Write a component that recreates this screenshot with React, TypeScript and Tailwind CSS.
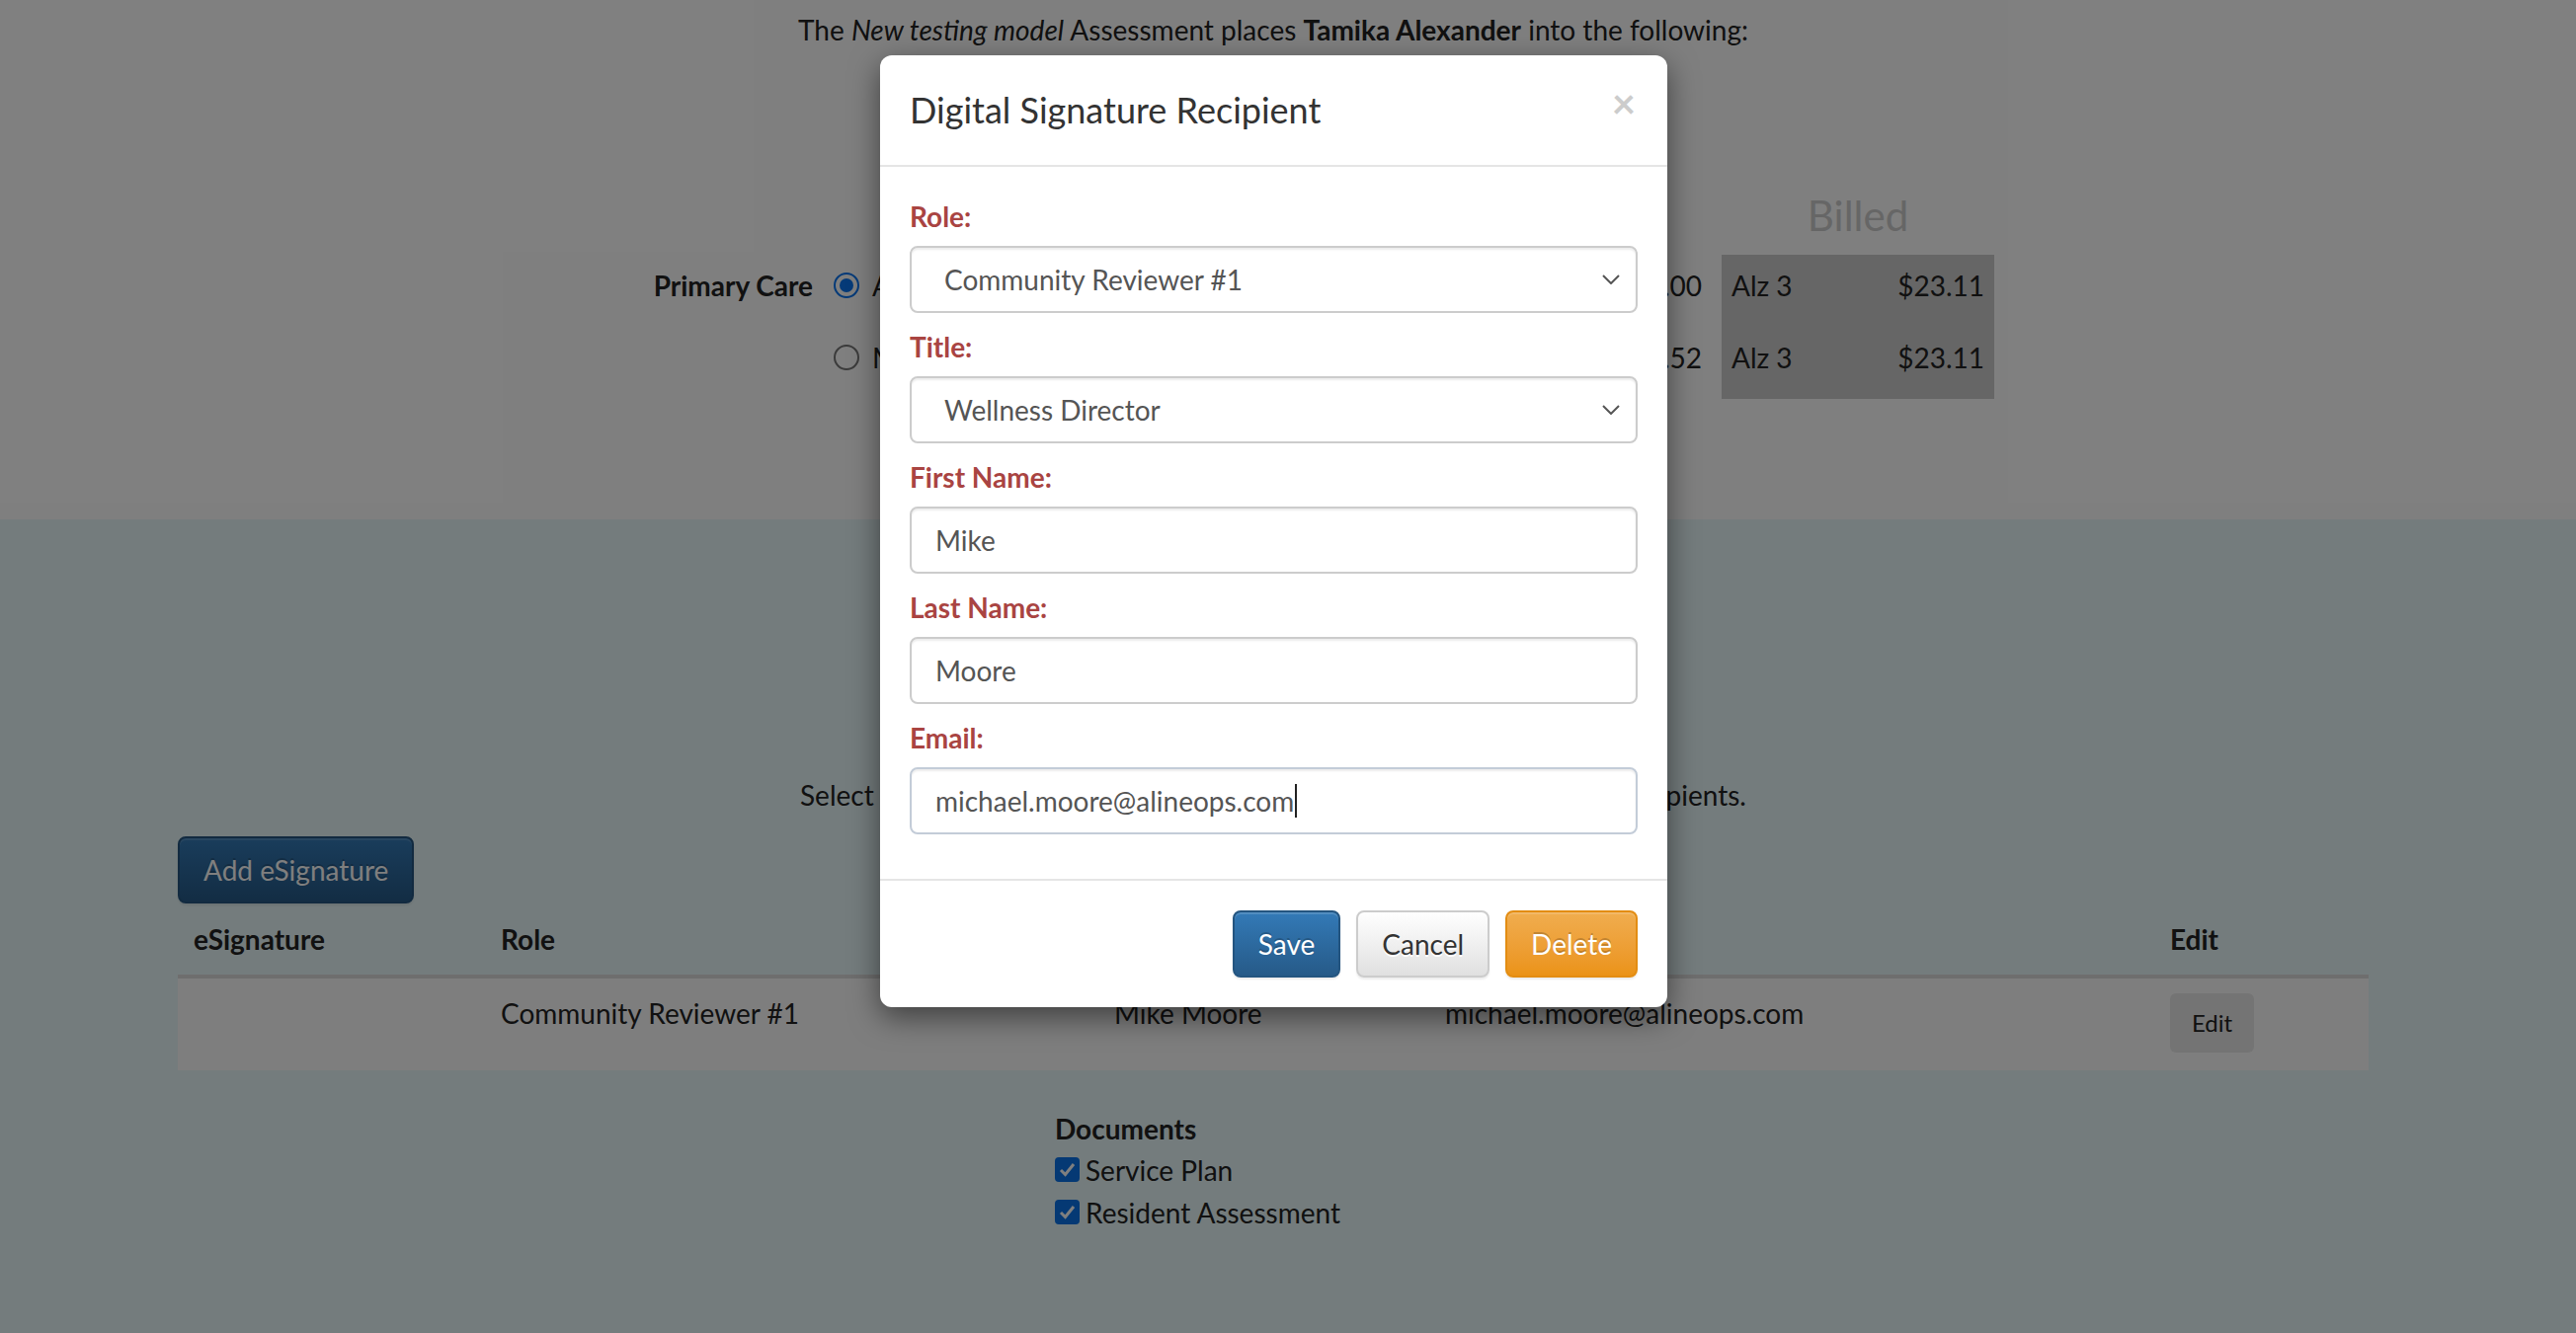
import React from "react";

const font = { fontFamily: "Lato, 'Noto Sans', sans-serif" };

function Chevron() {
  return (
    <svg width="18" height="10" viewBox="0 0 18 10" className="shrink-0">
      <polyline points="1,1 9,9 17,1" fill="none" stroke="#555" strokeWidth="2" />
    </svg>
  );
}

function SelectBox({ value }: { value: string }) {
  return (
    <div className="flex h-[68px] items-center justify-between rounded-[8px] border-2 border-[#ccc] bg-white pl-[33px] pr-[16px] text-[28px] text-[#555] shadow-[inset_0_2px_2px_rgba(0,0,0,0.075)]">
      <span>{value}</span>
      <Chevron />
    </div>
  );
}

function TextBox({ value, focused }: { value: string; focused?: boolean }) {
  return (
    <div
      className={`flex h-[68px] items-center rounded-[8px] border-2 bg-white px-[24px] text-[28px] text-[#555] shadow-[inset_0_2px_2px_rgba(0,0,0,0.075)] ${
        focused ? "border-[#c3ccd8]" : "border-[#ccc]"
      }`}
    >
      <span>{value}</span>
      {focused && <span className="ml-[1px] inline-block h-[34px] w-[2px] bg-[#222]" />}
    </div>
  );
}

function Field({ label, children }: { label: string; children: React.ReactNode }) {
  return (
    <div className="mb-[14px]">
      <div className="mb-[10px] text-[28px] font-bold leading-[40px] text-[#a94442]">{label}</div>
      {children}
    </div>
  );
}

function Btn({ kind, children }: { kind: "primary" | "default" | "warning"; children: React.ReactNode }) {
  const styles = {
    primary:
      "bg-gradient-to-b from-[#337ab7] to-[#265a88] border-[#245580] text-white [text-shadow:0_-2px_0_rgba(0,0,0,0.2)]",
    default:
      "bg-gradient-to-b from-white to-[#e0e0e0] border-[#ccc] text-[#333] [text-shadow:0_2px_0_#fff]",
    warning:
      "bg-gradient-to-b from-[#f0ad4e] to-[#eb9316] border-[#e38d13] text-white [text-shadow:0_-2px_0_rgba(0,0,0,0.2)]",
  }[kind];
  return (
    <button
      type="button"
      className={`h-[68px] rounded-[8px] border-2 px-[24px] text-[28px] leading-[40px] shadow-[inset_0_2px_0_rgba(255,255,255,0.15),0_2px_2px_rgba(0,0,0,0.075)] ${styles}`}
    >
      {children}
    </button>
  );
}

function CheckBox() {
  return (
    <span className="mr-[6px] inline-flex h-[25px] w-[25px] items-center justify-center rounded-[4px] bg-[#0a72e8]">
      <svg width="17" height="15" viewBox="0 0 17 15">
        <polyline points="2,8 6.5,12.5 15,2" fill="none" stroke="white" strokeWidth="3" />
      </svg>
    </span>
  );
}

function Radio({ checked }: { checked?: boolean }) {
  return (
    <span
      className={`inline-flex h-[26px] w-[26px] items-center justify-center rounded-full border-2 bg-white ${
        checked ? "border-[#0b75f0]" : "border-[#767676]"
      }`}
    >
      {checked && <span className="h-[14px] w-[14px] rounded-full bg-[#0b75f0]" />}
    </span>
  );
}

export default function App() {
  return (
    <div className="relative min-h-[1350px] overflow-hidden text-[28px] leading-[40px] text-[#333]" style={font}>
      {/* page behind the dialog */}
      <div className="h-[526px] bg-white pr-[30px]">
        <p className="pt-[10px] text-center text-[#222]">
          The <i>New testing model</i> Assessment places <b>Tamika Alexander</b> into the following:
        </p>
        <div className="ml-[500px] mt-[138px] grid grid-cols-[323px_60px_840px_20px_276px]">
          <div className="col-start-5 mb-[10px] text-center text-[42px] leading-[60px] text-[#ccc]">Billed</div>

          <div className="col-start-1 flex h-[73px] items-start justify-end pt-[11px] font-bold text-[#222]">Primary Care</div>
          <div className="flex h-[73px] items-start pl-[21px] pt-[18px]">
            <Radio checked />
          </div>
          <div className="flex h-[73px] items-start justify-between pt-[11px] text-[#222]">
            <span>Assisted Living</span>
            <span>$4,280.00</span>
          </div>
          <div />
          <div className="flex h-[73px] items-start justify-between bg-[#ccc] px-[10px] pt-[11px] text-[#222]">
            <span>Alz 3</span>
            <span>$23.11</span>
          </div>

          <div className="col-start-2 flex h-[73px] items-start pl-[21px] pt-[18px]">
            <Radio />
          </div>
          <div className="flex h-[73px] items-start justify-between pt-[11px] text-[#222]">
            <span>Memory Care</span>
            <span>$5,112.52</span>
          </div>
          <div />
          <div className="flex h-[73px] items-start justify-between bg-[#ccc] px-[10px] pt-[11px] text-[#222]">
            <span>Alz 3</span>
            <span>$23.11</span>
          </div>
        </div>
      </div>

      <div className="min-h-[824px] bg-[#e8f8fa] pr-[30px]">
        <p className="pt-[259px] text-center text-[#222]">
          Select the documents to be signed below, then add your eSignature recipients.
        </p>
        <div className="mx-[180px] mt-[22px]">
          <Btn kind="primary">Add eSignature</Btn>
          <div className="grid grid-cols-[311px_621px_335px_734px_217px] border-b-4 border-[#ddd] font-bold text-[#222]">
            <div className="p-[16px]">eSignature</div>
            <div className="p-[16px]">Role</div>
            <div className="p-[16px]">Name</div>
            <div className="p-[16px]">Email</div>
            <div className="p-[16px]">Edit</div>
          </div>
          <div className="grid h-[93px] grid-cols-[311px_621px_335px_734px_217px] bg-[#fdfdfd] text-[#222]">
            <div className="px-[16px] pt-[15px]" />
            <div className="px-[16px] pt-[15px]">Community Reviewer #1</div>
            <div className="px-[16px] pt-[15px]">Mike Moore</div>
            <div className="px-[16px] pt-[15px]">michael.moore@alineops.com</div>
            <div className="px-[16px] pt-[15px]">
              <button type="button" className="h-[60px] w-[85px] rounded-[6px] bg-[#e8e8e8] text-[24px] text-[#222]">
                Edit
              </button>
            </div>
          </div>
        </div>
        <div className="ml-[1068px] mt-[39px] text-[#222]">
          <div className="font-bold">Documents</div>
          <div className="flex h-[43px] items-center">
            <CheckBox />
            Service Plan
          </div>
          <div className="flex h-[43px] items-center">
            <CheckBox />
            Resident Assessment
          </div>
        </div>
      </div>

      {/* backdrop */}
      <div className="absolute inset-0 bg-black/50" />

      {/* dialog */}
      <div className="absolute left-[891px] top-[56px] w-[797px] rounded-[12px] bg-white shadow-[0_10px_30px_rgba(0,0,0,0.5)]">
        <div className="flex items-start justify-between border-b-2 border-[#e5e5e5] p-[30px]">
          <h4 className="text-[36px] leading-[51px] text-[#333]">Digital Signature Recipient</h4>
          <span className="-mt-[7px] mr-[2px] text-[42px] font-bold leading-[51px] text-[#ccc]">×</span>
        </div>
        <div className="px-[30px] pb-[31px] pt-[30px]">
          <Field label="Role:">
            <SelectBox value="Community Reviewer #1" />
          </Field>
          <Field label="Title:">
            <SelectBox value="Wellness Director" />
          </Field>
          <Field label="First Name:">
            <TextBox value="Mike" />
          </Field>
          <Field label="Last Name:">
            <TextBox value="Moore" />
          </Field>
          <Field label="Email:">
            <TextBox value="michael.moore@alineops.com" focused />
          </Field>
        </div>
        <div className="flex justify-end gap-[16px] border-t-2 border-[#e5e5e5] p-[30px]">
          <Btn kind="primary">Save</Btn>
          <Btn kind="default">Cancel</Btn>
          <Btn kind="warning">Delete</Btn>
        </div>
      </div>
    </div>
  );
}
